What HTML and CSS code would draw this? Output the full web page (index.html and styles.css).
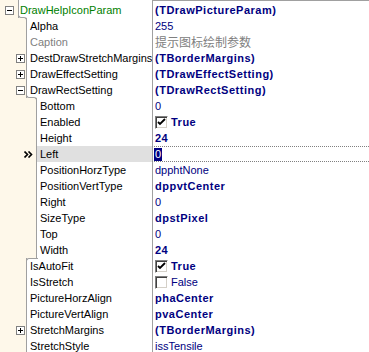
FILE: index.html
```html
<!DOCTYPE html>
<html lang="en">
    <head>
        <title>Object Inspector</title>
        <link rel="stylesheet" href="styles.css">
    </head>
    <body>
        <div class="grid">
            <div class="row lv0 first">
                <div class="key">
                    <div class="gutter"><svg class="exp" width="9" height="9"><rect x=".5" y=".5" width="8" height="8" fill="#fff" stroke="#808080"/><path d="M2 4.5h5" stroke="#000"/></svg></div>
                    <div class="name green">DrawHelpIconParam</div>
                </div>
                <div class="value"><b>(TDrawPictureParam)</b></div>
            </div>
            <div class="row lv1 down" style="--from: 18px; --to: 26px;">
                <div class="key"><div class="gutter"></div><div class="name">Alpha</div></div>
                <div class="value">255</div>
            </div>
            <div class="row lv1">
                <div class="key"><div class="gutter"></div><div class="name grey">Caption</div></div>
                <div class="value"><span class="cjk">提示图标绘制参数</span></div>
            </div>
            <div class="row lv1">
                <div class="key">
                    <div class="gutter"><svg class="exp" width="9" height="9"><rect x=".5" y=".5" width="8" height="8" fill="#fff" stroke="#808080"/><path d="M2 4.5h5M4.5 2v5" stroke="#000"/></svg></div>
                    <div class="name">DestDrawStretchMargins</div>
                </div>
                <div class="value"><b>(TBorderMargins)</b></div>
            </div>
            <div class="row lv1">
                <div class="key">
                    <div class="gutter"><svg class="exp" width="9" height="9"><rect x=".5" y=".5" width="8" height="8" fill="#fff" stroke="#808080"/><path d="M2 4.5h5M4.5 2v5" stroke="#000"/></svg></div>
                    <div class="name">DrawEffectSetting</div>
                </div>
                <div class="value"><b>(TDrawEffectSetting)</b></div>
            </div>
            <div class="row lv1">
                <div class="key">
                    <div class="gutter"><svg class="exp" width="9" height="9"><rect x=".5" y=".5" width="8" height="8" fill="#fff" stroke="#808080"/><path d="M2 4.5h5" stroke="#000"/></svg></div>
                    <div class="name">DrawRectSetting</div>
                </div>
                <div class="value"><b>(TDrawRectSetting)</b></div>
            </div>
            <div class="row lv2 down" style="--from: 26px; --to: 36px;">
                <div class="key"><div class="gutter"></div><div class="name">Bottom</div></div>
                <div class="value">0</div>
            </div>
            <div class="row lv2">
                <div class="key"><div class="gutter"></div><div class="name">Enabled</div></div>
                <div class="value">
                    <span class="chk"><svg width="11" height="11"><path d="M2 5l2 2 5-5" fill="none" stroke="#000" stroke-width="1.8"/></svg></span><b>True</b>
                </div>
            </div>
            <div class="row lv2">
                <div class="key"><div class="gutter"></div><div class="name">Height</div></div>
                <div class="value"><b>24</b></div>
            </div>
            <div class="row lv2 sel">
                <div class="key">
                    <div class="gutter"><svg width="9" height="7"><path d="M.5 .5l3 3-3 3M4.5 .5l3 3-3 3" fill="none" stroke="#000" stroke-width="1.6"/></svg></div>
                    <div class="name">Left</div>
                </div>
                <div class="value"><span class="cur">0</span></div>
            </div>
            <div class="row lv2">
                <div class="key"><div class="gutter"></div><div class="name">PositionHorzType</div></div>
                <div class="value">dpphtNone</div>
            </div>
            <div class="row lv2">
                <div class="key"><div class="gutter"></div><div class="name">PositionVertType</div></div>
                <div class="value"><b>dppvtCenter</b></div>
            </div>
            <div class="row lv2">
                <div class="key"><div class="gutter"></div><div class="name">Right</div></div>
                <div class="value">0</div>
            </div>
            <div class="row lv2">
                <div class="key"><div class="gutter"></div><div class="name">SizeType</div></div>
                <div class="value"><b>dpstPixel</b></div>
            </div>
            <div class="row lv2">
                <div class="key"><div class="gutter"></div><div class="name">Top</div></div>
                <div class="value">0</div>
            </div>
            <div class="row lv2">
                <div class="key"><div class="gutter"></div><div class="name">Width</div></div>
                <div class="value"><b>24</b></div>
            </div>
            <div class="row lv1 up" style="--from: 36px; --to: 26px;">
                <div class="key"><div class="gutter"></div><div class="name">IsAutoFit</div></div>
                <div class="value">
                    <span class="chk"><svg width="11" height="11"><path d="M2 5l2 2 5-5" fill="none" stroke="#000" stroke-width="1.8"/></svg></span><b>True</b>
                </div>
            </div>
            <div class="row lv1">
                <div class="key"><div class="gutter"></div><div class="name">IsStretch</div></div>
                <div class="value"><span class="chk"></span>False</div>
            </div>
            <div class="row lv1">
                <div class="key"><div class="gutter"></div><div class="name">PictureHorzAlign</div></div>
                <div class="value"><b>phaCenter</b></div>
            </div>
            <div class="row lv1">
                <div class="key"><div class="gutter"></div><div class="name">PictureVertAlign</div></div>
                <div class="value"><b>pvaCenter</b></div>
            </div>
            <div class="row lv1">
                <div class="key">
                    <div class="gutter"><svg class="exp" width="9" height="9"><rect x=".5" y=".5" width="8" height="8" fill="#fff" stroke="#808080"/><path d="M2 4.5h5M4.5 2v5" stroke="#000"/></svg></div>
                    <div class="name">StretchMargins</div>
                </div>
                <div class="value"><b>(TBorderMargins)</b></div>
            </div>
            <div class="row lv1">
                <div class="key"><div class="gutter"></div><div class="name">StretchStyle</div></div>
                <div class="value">issTensile</div>
            </div>
        </div>
    </body>
</html>
```

FILE: styles.css
```css
*{
    box-sizing: border-box;
}
body{
    margin: 0;
    background-color: #fff;
    font-family: "Liberation Sans", Tahoma, sans-serif;
    font-size: 11px;
    color: #000;
    overflow: hidden;
}
.grid{
    width: 369px;
}
.row{
    display: flex;
    height: 16px;
    position: relative;
}
.key{
    width: 152px;
    flex: none;
    display: flex;
}
.gutter{
    flex: none;
    display: flex;
    align-items: center;
    background-color: #fef8ea;
}
.lv0 .gutter{
    width: 18px;
    padding-left: 5px;
}
.lv1 .gutter{
    width: 26px;
    padding-left: 16px;
}
.lv2 .gutter{
    width: 36px;
    padding-left: 24px;
}
.name{
    flex: 1;
    min-width: 0;
    border-left: 1px solid #a0a0a0;
    padding-left: 3px;
    line-height: 16px;
    white-space: nowrap;
    overflow: hidden;
}
.lv0 .name{
    padding-left: 1px;
}
.value{
    flex: 1;
    min-width: 0;
    display: flex;
    align-items: center;
    border-left: 1px solid #a0a0a0;
    padding-left: 2px;
    line-height: 16px;
    color: #000080;
    white-space: nowrap;
    overflow: hidden;
}
.value b{
    letter-spacing: 0.5px;
}
.exp{
    display: block;
}

/* first row carries the frame edge */
.first{
    height: 18px;
}
.first .gutter, .first .name{
    padding-top: 2px;
}
.first .value{
    border-top: 1px solid #a0a0a0;
    padding-top: 1px;
}

.green{
    color: #008000;
}
.grey{
    color: #808080;
}
.cjk{
    font-family: "Noto Sans CJK SC", sans-serif;
    font-size: 12px;
    color: #808080;
}

/* tree steps */
.down::before{
    content: "";
    position: absolute;
    left: var(--from);
    top: -4px;
    width: 4px;
    height: 3px;
    border-left: 1px solid #a0a0a0;
    border-bottom: 1px solid #a0a0a0;
    border-bottom-left-radius: 3px;
}
.down::after{
    content: "";
    position: absolute;
    left: calc(var(--from) + 4px);
    top: -1px;
    width: calc(var(--to) - var(--from) - 4px);
    height: 4px;
    border-top: 1px solid #a0a0a0;
    border-right: 1px solid #a0a0a0;
    border-top-right-radius: 3px;
    background-color: #fef8ea;
}
.up::before{
    content: "";
    position: absolute;
    left: var(--to);
    top: 0;
    width: calc(var(--from) - var(--to) + 1px);
    height: 4px;
    border-top: 1px solid #a0a0a0;
    border-left: 1px solid #a0a0a0;
    border-top-left-radius: 3px;
}

/* selected row */
.sel .name{
    background-color: #e0e0e0;
}
.sel .value{
    border-top: 1px dotted #808080;
    border-bottom: 1px dotted #808080;
}
.cur{
    display: inline-block;
    height: 13px;
    line-height: 13px;
    padding: 0 1px;
    margin-left: -1px;
    background-color: #000080;
    color: #fff;
}

.chk{
    display: inline-block;
    width: 13px;
    height: 13px;
    margin-right: 3px;
    border: 1px solid;
    border-color: #808080 #fff #fff #808080;
    box-shadow: inset 1px 1px #404040, inset -1px -1px #d4d0c8;
    background-color: #fff;
}
.chk svg{
    display: block;
}
```
